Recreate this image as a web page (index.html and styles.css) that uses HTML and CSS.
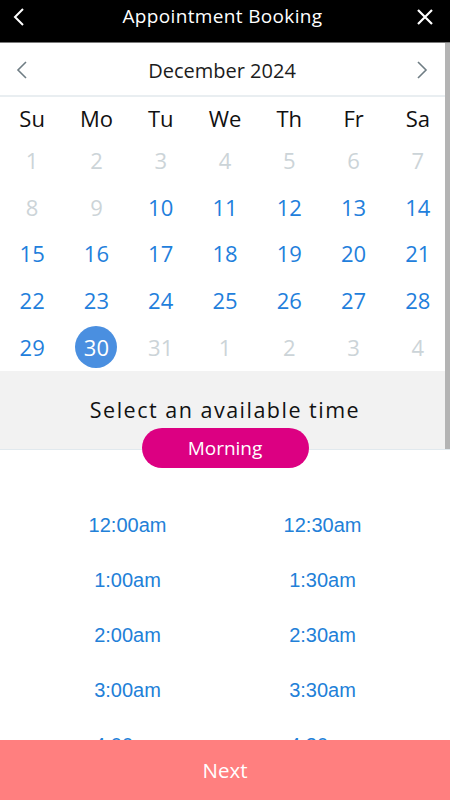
FILE: index.html
```html
<!DOCTYPE html>
<html lang="en">
<head>
<meta charset="utf-8">
<title>Appointment Booking</title>
<link rel="stylesheet" href="styles.css">
</head>
<body>
<div class="app">
  <header class="topbar">
    <svg class="icon back" viewBox="0 0 12 20" width="12" height="20"><path d="M10 2 L2 10 L10 18" fill="none" stroke="#fff" stroke-width="2"/></svg>
    <h1 class="title">Appointment Booking</h1>
    <svg class="icon close" viewBox="0 0 18 18" width="18" height="18"><path d="M2 2 L16 16 M16 2 L2 16" fill="none" stroke="#fff" stroke-width="2.2"/></svg>
  </header>
  <div class="scroller">
    <div class="monthbar">
      <svg class="arrow" viewBox="0 0 12 18" width="12" height="18"><path d="M10 1 L2 9 L10 17" fill="none" stroke="#6f7d84" stroke-width="1.6"/></svg>
      <div class="month">December 2024</div>
      <svg class="arrow" viewBox="0 0 12 18" width="12" height="18"><path d="M2 1 L10 9 L2 17" fill="none" stroke="#6f7d84" stroke-width="1.6"/></svg>
    </div>
    <div class="weekdays">
      <span>Su</span><span>Mo</span><span>Tu</span><span>We</span><span>Th</span><span>Fr</span><span>Sa</span>
    </div>
    <div class="days">
      <span class="off">1</span><span class="off">2</span><span class="off">3</span><span class="off">4</span><span class="off">5</span><span class="off">6</span><span class="off">7</span>
      <span class="off">8</span><span class="off">9</span><span>10</span><span>11</span><span>12</span><span>13</span><span>14</span>
      <span>15</span><span>16</span><span>17</span><span>18</span><span>19</span><span>20</span><span>21</span>
      <span>22</span><span>23</span><span>24</span><span>25</span><span>26</span><span>27</span><span>28</span>
      <span>29</span><span class="sel"><b>30</b></span><span class="off">31</span><span class="off">1</span><span class="off">2</span><span class="off">3</span><span class="off">4</span>
    </div>
    <div class="timehead">
      <div class="prompt">Select an available time</div>
      <div class="pill">Morning</div>
    </div>
    <div class="scrollthumb"></div>
  </div>
  <div class="times">
    <span>12:00am</span><span>12:30am</span>
    <span>1:00am</span><span>1:30am</span>
    <span>2:00am</span><span>2:30am</span>
    <span>3:00am</span><span>3:30am</span>
    <span>4:00am</span><span>4:30am</span>
  </div>
  <button class="next">Next</button>
</div>
</body>
</html>
```
FILE: styles.css
```css
* { box-sizing: border-box; }
html, body { margin: 0; padding: 0; }
body {
  width: 450px;
  height: 800px;
  overflow: hidden;
  font-family: "Open Sans", "Noto Sans", sans-serif;
  background: #fff;
}
.app {
  position: relative;
  width: 450px;
  height: 800px;
  overflow: hidden;
}
.topbar {
  height: 43px;
  background: #000;
  border-bottom: 1px solid #7a7a7a;
  display: flex;
  align-items: center;
  justify-content: space-between;
  padding: 0 16px 0 12px;
}
.icon { display: block; }
.back { margin-top: -8px; margin-left: 1px; }
.close { margin-top: -8px; }
.title {
  margin: -11px 0 0 4px;
  font-size: 19px;
  font-weight: 400;
  color: #fff;
  letter-spacing: 0.35px;
}
.scroller {
  position: relative;
}
.scrollthumb {
  position: absolute;
  right: 0;
  top: 0;
  width: 5px;
  height: 406px;
  background: #b4b4b4;
}
.monthbar {
  height: 54px;
  border-bottom: 2px solid #e9eef1;
  display: flex;
  align-items: center;
  justify-content: space-between;
  padding: 0 22px 0 16px;
}
.arrow { margin-top: 2px; }
.month {
  font-size: 20px;
  color: #1c1c1c;
  margin-top: 2px;
}
.weekdays, .days {
  display: grid;
  grid-template-columns: repeat(7, 1fr);
}
.weekdays span {
  height: 40px;
  display: flex;
  align-items: center;
  justify-content: center;
  font-size: 22px;
  color: #111;
  padding-top: 1px;
}
.days span {
  height: 46.8px;
  display: flex;
  align-items: center;
  justify-content: center;
  font-size: 22px;
  color: #1f80dc;
  padding-bottom: 1px;
}
.days span.off { color: #ccd4d8; }
.days span.sel b {
  font-weight: 400;
  width: 42px;
  height: 42px;
  border-radius: 50%;
  background: #4a8fe0;
  color: #fff;
  display: flex;
  align-items: center;
  justify-content: center;
}
.timehead {
  height: 79px;
  background: #f2f2f2;
  border-bottom: 1px solid #e1e9ee;
  display: flex;
  flex-direction: column;
  align-items: center;
  padding-top: 24px;
}
.prompt {
  flex-shrink: 0;
  font-size: 21.5px;
  letter-spacing: 1.5px;
  color: #111;
  line-height: 30px;
}
.pill {
  flex-shrink: 0;
  margin-top: 3px;
  width: 167px;
  height: 40px;
  border-radius: 20px;
  background: #dc0082;
  color: #fff;
  font-size: 19px;
  display: flex;
  align-items: center;
  justify-content: center;
  position: relative;
  z-index: 1;
}
.times {
  display: grid;
  grid-template-columns: 1fr 1fr;
  padding: 48px 30px 0;
}
.times span {
  height: 55px;
  display: flex;
  align-items: center;
  justify-content: center;
  font-family: "Liberation Sans", Arial, sans-serif;
  font-size: 20px;
  color: #2280d8;
}
.next {
  position: absolute;
  left: 0;
  bottom: 0;
  width: 450px;
  height: 60px;
  border: 0;
  margin: 0;
  background: #ff7f7f;
  color: #fff;
  font-family: "Open Sans", "Noto Sans", sans-serif;
  font-size: 20.5px;
  padding: 0;
}
```
